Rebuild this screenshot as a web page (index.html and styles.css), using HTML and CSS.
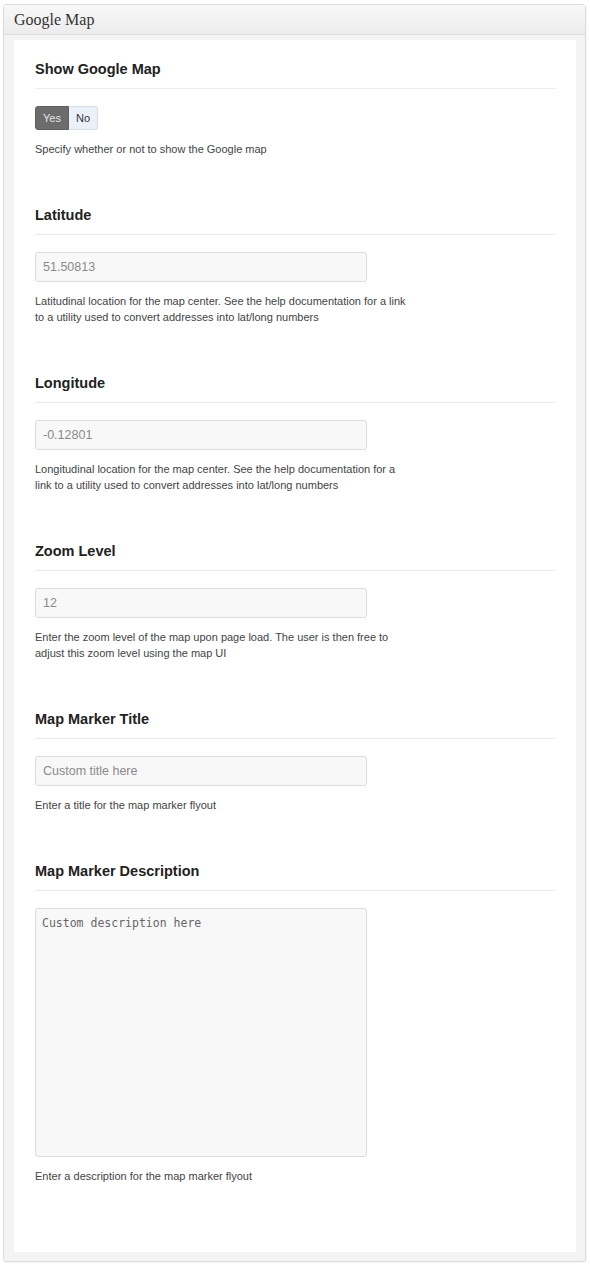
FILE: index.html
```html
<!DOCTYPE html>
<html>
<head>
<meta charset="utf-8">
<link rel="stylesheet" href="styles.css">
</head>
<body>
<div class="box">
  <div class="box-header"><h2 class="box-title">Google Map</h2></div>
  <div class="box-body">
    <div class="panel">
      <div class="field">
        <h3 class="field-title">Show Google Map</h3>
        <div class="toggle"><span class="toggle-btn on">Yes</span><span class="toggle-btn off">No</span></div>
        <p class="field-desc">Specify whether or not to show the Google map</p>
      </div>
      <div class="field">
        <h3 class="field-title">Latitude</h3>
        <input class="text-input" type="text" value="51.50813">
        <p class="field-desc">Latitudinal location for the map center. See the help documentation for a link to a utility used to convert addresses into lat/long numbers</p>
      </div>
      <div class="field">
        <h3 class="field-title">Longitude</h3>
        <input class="text-input" type="text" value="-0.12801">
        <p class="field-desc">Longitudinal location for the map center. See the help documentation for a link to a utility used to convert addresses into lat/long numbers</p>
      </div>
      <div class="field">
        <h3 class="field-title">Zoom Level</h3>
        <input class="text-input" type="text" value="12">
        <p class="field-desc">Enter the zoom level of the map upon page load. The user is then free to adjust this zoom level using the map UI</p>
      </div>
      <div class="field">
        <h3 class="field-title">Map Marker Title</h3>
        <input class="text-input" type="text" placeholder="Custom title here">
        <p class="field-desc">Enter a title for the map marker flyout</p>
      </div>
      <div class="field">
        <h3 class="field-title">Map Marker Description</h3>
        <textarea class="text-area" placeholder="Custom description here"></textarea>
        <p class="field-desc">Enter a description for the map marker flyout</p>
      </div>
    </div>
  </div>
</div>
</body>
</html>
```
FILE: styles.css
```css
html, body {
  margin: 0;
  padding: 0;
  background: #ffffff;
}
body {
  padding: 4px 4px 5px 3px;
  font-family: "Liberation Sans", Arial, sans-serif;
}
.box {
  width: 581px;
  border: 1px solid #dcdcdc;
  border-radius: 3px;
  background: #f3f3f3;
  box-shadow: 1px 1px 1px rgba(0,0,0,0.04);
}
.box-header {
  height: 29px;
  border-bottom: 1px solid #dedede;
  background: linear-gradient(to bottom, #f8f8f8, #ececec);
  display: flex;
  align-items: center;
  padding-left: 10px;
}
.box-title {
  margin: 0;
  font-family: "Liberation Serif", "Times New Roman", serif;
  font-weight: normal;
  font-size: 16px;
  color: #333;
  line-height: 20px;
}
.box-body {
  padding: 5px 9px 9px 10px;
}
.panel {
  background: #ffffff;
  padding: 19px 21px 20px 21px;
}
.field {
  margin-bottom: 48px;
}
.field-title {
  margin: 0;
  font-size: 14.5px;
  font-weight: bold;
  line-height: 20px;
  color: #222;
  padding-bottom: 9px;
  border-bottom: 1px solid #ebebeb;
  margin-bottom: 17px;
}
.toggle {
  display: flex;
  height: 24px;
}
.toggle-btn {
  display: flex;
  align-items: center;
  justify-content: center;
  font-size: 11px;
  box-sizing: border-box;
  height: 24px;
}
.toggle-btn.on {
  width: 34px;
  background: #6c6c6c;
  color: #e4e4e4;
  border: 1px solid #5f5f5f;
  border-radius: 3px 0 0 3px;
}
.toggle-btn.off {
  width: 29px;
  background: #eaf1f9;
  color: #333;
  border: 1px solid #d6dde5;
  border-left: none;
  border-radius: 0 3px 3px 0;
}
.field-desc {
  margin: 11px 0 0 0;
  max-width: 375px;
  font-size: 11px;
  line-height: 16px;
  color: #444;
}
.text-input {
  display: block;
  box-sizing: border-box;
  width: 332px;
  height: 30px;
  margin: 0;
  padding: 0 7px;
  border: 1px solid #dddddd;
  border-radius: 3px;
  background: #f8f8f8;
  font-family: "Liberation Sans", Arial, sans-serif;
  font-size: 12.5px;
  color: #8a8a8a;
  outline: none;
}
.text-input::placeholder {
  color: #8a8a8a;
  opacity: 1;
}
.text-area {
  display: block;
  box-sizing: border-box;
  width: 332px;
  height: 249px;
  margin: 0;
  padding: 6px 6px;
  border: 1px solid #dddddd;
  border-radius: 3px;
  background: #f8f8f8;
  font-family: "DejaVu Sans Mono", "Liberation Mono", monospace;
  font-size: 11.5px;
  line-height: 16px;
  color: #666;
  resize: none;
  outline: none;
}
.text-area::placeholder {
  color: #666;
  opacity: 1;
}
```
